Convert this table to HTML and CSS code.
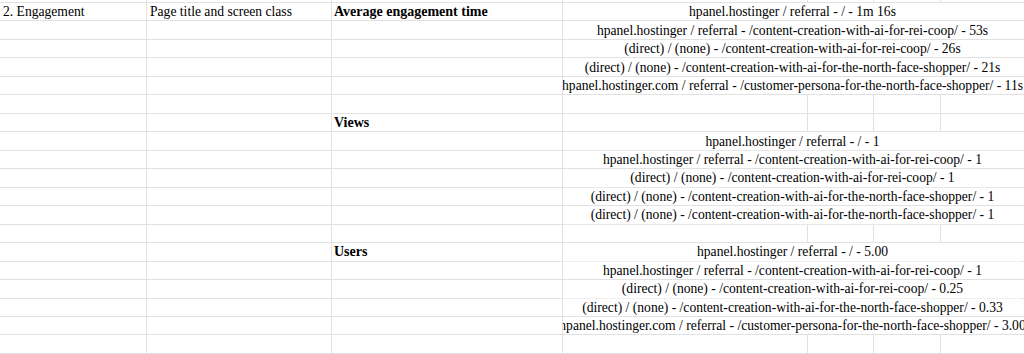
FILE: index.html
```html
<!DOCTYPE html>
<html lang="en">
<head>
<meta charset="utf-8">
<title>Engagement</title>
<link rel="stylesheet" href="styles.css">
</head>
<body>
<div class="sheet">
  <div class="grid">
    <!-- partial row above -->
    <div class="c"></div><div class="c"></div><div class="c"></div><div class="c"></div><div class="c"></div><div class="c"></div><div class="c g"></div><div class="c h"></div>

    <div class="c">2. Engagement</div><div class="c">Page title and screen class</div><div class="c b">Average engagement time</div><div class="c v"><span>hpanel.hostinger / referral - / - 1m 16s</span></div><div class="c h"></div>
    <div class="c"></div><div class="c"></div><div class="c"></div><div class="c v"><span>hpanel.hostinger / referral - /content-creation-with-ai-for-rei-coop/ - 53s</span></div><div class="c h"></div>
    <div class="c"></div><div class="c"></div><div class="c"></div><div class="c v"><span>(direct) / (none) - /content-creation-with-ai-for-rei-coop/ - 26s</span></div><div class="c h"></div>
    <div class="c"></div><div class="c"></div><div class="c"></div><div class="c v"><span>(direct) / (none) - /content-creation-with-ai-for-the-north-face-shopper/ - 21s</span></div><div class="c h"></div>
    <div class="c"></div><div class="c"></div><div class="c"></div><div class="c v"><span>hpanel.hostinger.com / referral - /customer-persona-for-the-north-face-shopper/ - 11s</span></div><div class="c h"></div>
    <div class="c"></div><div class="c"></div><div class="c"></div><div class="c"></div><div class="c"></div><div class="c"></div><div class="c g"></div><div class="c h"></div>

    <div class="c"></div><div class="c"></div><div class="c b">Views</div><div class="c"></div><div class="c"></div><div class="c"></div><div class="c g"></div><div class="c h"></div>
    <div class="c"></div><div class="c"></div><div class="c"></div><div class="c v"><span>hpanel.hostinger / referral - / - 1</span></div><div class="c h"></div>
    <div class="c"></div><div class="c"></div><div class="c"></div><div class="c v"><span>hpanel.hostinger / referral - /content-creation-with-ai-for-rei-coop/ - 1</span></div><div class="c h"></div>
    <div class="c"></div><div class="c"></div><div class="c"></div><div class="c v"><span>(direct) / (none) - /content-creation-with-ai-for-rei-coop/ - 1</span></div><div class="c h"></div>
    <div class="c"></div><div class="c"></div><div class="c"></div><div class="c v"><span>(direct) / (none) - /content-creation-with-ai-for-the-north-face-shopper/ - 1</span></div><div class="c h"></div>
    <div class="c"></div><div class="c"></div><div class="c"></div><div class="c v"><span>(direct) / (none) - /content-creation-with-ai-for-the-north-face-shopper/ - 1</span></div><div class="c h"></div>
    <div class="c"></div><div class="c"></div><div class="c"></div><div class="c"></div><div class="c"></div><div class="c"></div><div class="c g"></div><div class="c h"></div>

    <div class="c"></div><div class="c"></div><div class="c b">Users</div><div class="c v"><span>hpanel.hostinger / referral - / - 5.00</span></div><div class="c h"></div>
    <div class="c"></div><div class="c"></div><div class="c"></div><div class="c v"><span>hpanel.hostinger / referral - /content-creation-with-ai-for-rei-coop/ - 1</span></div><div class="c h"></div>
    <div class="c"></div><div class="c"></div><div class="c"></div><div class="c v"><span>(direct) / (none) - /content-creation-with-ai-for-rei-coop/ - 0.25</span></div><div class="c h"></div>
    <div class="c"></div><div class="c"></div><div class="c"></div><div class="c v"><span>(direct) / (none) - /content-creation-with-ai-for-the-north-face-shopper/ - 0.33</span></div><div class="c h"></div>
    <div class="c"></div><div class="c"></div><div class="c"></div><div class="c v"><span>hpanel.hostinger.com / referral - /customer-persona-for-the-north-face-shopper/ - 3.00</span></div><div class="c h"></div>
    <div class="c"></div><div class="c"></div><div class="c"></div><div class="c"></div><div class="c"></div><div class="c"></div><div class="c g"></div><div class="c h"></div>
    <div class="c"></div><div class="c"></div><div class="c"></div><div class="c"></div><div class="c"></div><div class="c"></div><div class="c g"></div><div class="c h"></div>
  </div>
</div>
</body>
</html>
```

FILE: styles.css
```css
html, body {
  margin: 0;
  padding: 0;
  background: #ffffff;
  overflow: hidden;
}

.sheet {
  width: 1024px;
  height: 354px;
  overflow: hidden;
}

.grid {
  width: 1070px;
  display: grid;
  grid-template-columns: 147px 185px 231px 245px 66px 67px 81px 1fr;
  grid-template-rows: 3px;
  grid-auto-rows: 18.47px;
  font-family: "Liberation Serif", "Times New Roman", serif;
  font-size: 13.6px;
  color: #000000;
}

.c {
  box-sizing: border-box;
  border-right: 1px solid #e1e1e1;
  border-bottom: 1px solid #e1e1e1;
  padding-left: 3px;
  padding-top: 1px;
  display: flex;
  align-items: center;
  white-space: nowrap;
  overflow: hidden;
  min-width: 0;
}

.b {
  font-weight: bold;
  font-size: 14px;
  padding-left: 2px;
}

.g, .h {
  border-right: none;
}

.v {
  grid-column: 4 / 8;
  justify-content: center;
  padding-left: 0;
  border-right: none;
  overflow: visible;
  clip-path: inset(0 -120px 0 0);
}
```
